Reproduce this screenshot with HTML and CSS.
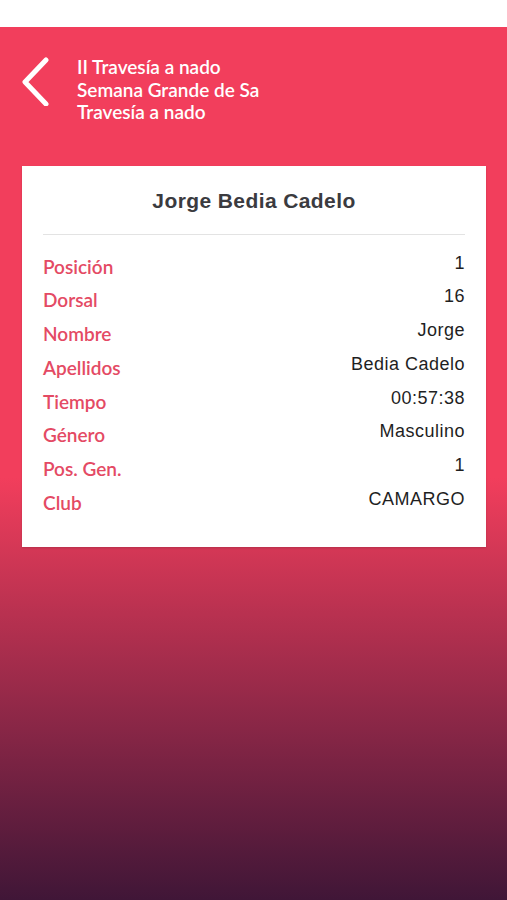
FILE: index.html
```html
<!DOCTYPE html>
<html>
<head>
	<title>Resultado</title>
	<link rel="stylesheet" href="styles.css">
</head>
<body>
	<div class="status-bar"></div>

	<div class="app">
		<div class="header">
			<a class="back" href="#">
				<svg width="30" height="50" viewBox="0 0 30 50">
					<polyline points="25,4 4,26 25,48" fill="none" stroke="#fff" stroke-width="5" stroke-linecap="round" stroke-linejoin="round"/>
				</svg>
			</a>
			<div class="title">
				<div>II Travesía a nado</div>
				<div>Semana Grande de Sa</div>
				<div>Travesía a nado</div>
			</div>
		</div>

		<div class="card">
			<h2 class="name">Jorge Bedia Cadelo</h2>
			<div class="divider"></div>

			<div class="row"><span class="label">Posición</span><span class="value">1</span></div>
			<div class="row"><span class="label">Dorsal</span><span class="value">16</span></div>
			<div class="row"><span class="label">Nombre</span><span class="value">Jorge</span></div>
			<div class="row"><span class="label">Apellidos</span><span class="value">Bedia Cadelo</span></div>
			<div class="row"><span class="label">Tiempo</span><span class="value">00:57:38</span></div>
			<div class="row"><span class="label">Género</span><span class="value">Masculino</span></div>
			<div class="row"><span class="label">Pos. Gen.</span><span class="value">1</span></div>
			<div class="row"><span class="label">Club</span><span class="value">CAMARGO</span></div>
		</div>
	</div>
</body>
</html>
```

FILE: styles.css
```css
	html, body{
		margin: 0;
		padding: 0;
	}
	body{
		width: 507px;
		height: 900px;
		overflow: hidden;
		font-family: Lato, "Noto Sans", sans-serif;
	}
	.status-bar{
		height: 27px;
		background: #fff;
	}
	.app{
		height: 873px;
		padding-top: 29px;
		box-sizing: border-box;
		background: linear-gradient(to bottom, #f23e5c 0, #f23e5c 450px, #401637 873px);
	}

	.header{
		display: flex;
		align-items: flex-start;
		padding-left: 21px;
	}
	.header .back{
		display: block;
		width: 30px;
		height: 50px;
	}
	.header .back svg{
		display: block;
	}
	.header .title{
		margin-left: 26px;
		color: #fff;
		font-size: 19px;
		font-weight: 600;
		line-height: 22.5px;
	}

	.card{
		margin: 42px 21px 0 22px;
		background: #fff;
		padding: 23px 21px 25px;
		box-shadow: 0 1px 2px rgba(0, 0, 0, .15);
	}
	.name{
		margin: 0;
		text-align: center;
		font-family: "Liberation Sans", Arial, sans-serif;
		font-size: 21px;
		letter-spacing: 0.4px;
		line-height: 24px;
		font-weight: 700;
		color: #3b3b3f;
	}
	.divider{
		height: 1px;
		background: #e3e3e3;
		margin: 21px 0 17px;
	}
	.row{
		display: flex;
		justify-content: space-between;
		align-items: flex-start;
		height: 33.8px;
	}
	.label{
		color: #e44a64;
		font-size: 19px;
		font-weight: 600;
		line-height: 30px;
	}
	.value{
		font-family: "Liberation Sans", Arial, sans-serif;
		font-size: 18px;
		letter-spacing: 0.5px;
		line-height: 22px;
		color: #1f1f1f;
	}
```
